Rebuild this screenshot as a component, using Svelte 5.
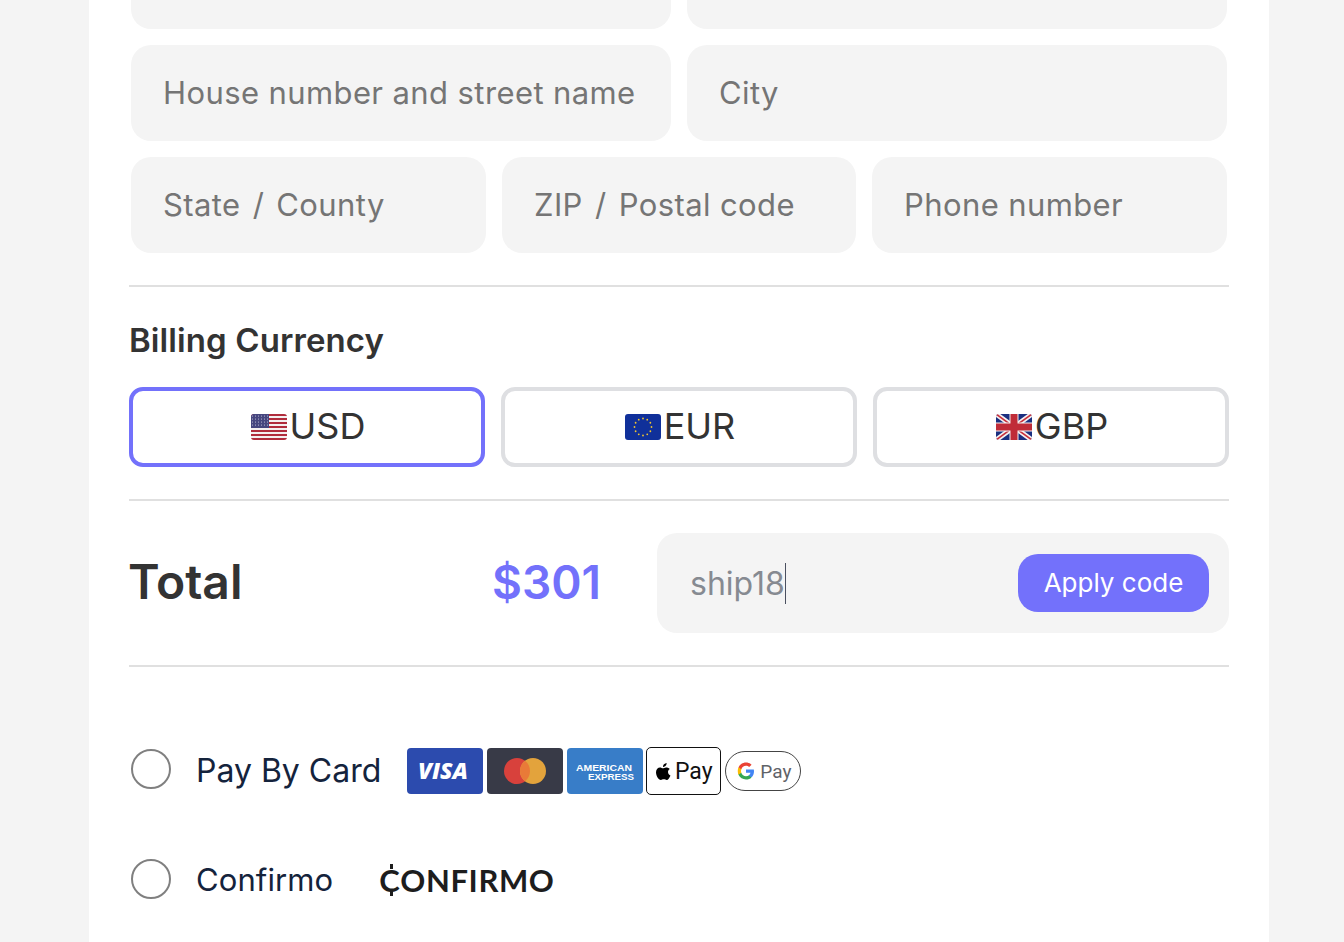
<script lang="ts">
	const currencies = [
		{ code: 'USD', flag: 'us' },
		{ code: 'EUR', flag: 'eu' },
		{ code: 'GBP', flag: 'gb' }
	];
	let selected = $state('USD');
	let coupon = $state('ship18');

	const stars = Array.from({ length: 12 }, (_, i) => {
		const a = (i * Math.PI) / 6;
		return { x: 18 + Math.cos(a) * 8.5, y: 13 + Math.sin(a) * 8.5 };
	});
	const stripes = [0, 2, 4, 6, 8, 10, 12].map((i) => i * 2);
</script>

<main class="card">
	<div class="fields two">
		<div class="field"></div>
		<div class="field"></div>
	</div>
	<div class="fields two">
		<div class="field"><span>House number and street name</span></div>
		<div class="field"><span>City</span></div>
	</div>
	<div class="fields three">
		<div class="field"><span>State <span class="slash">/</span> County</span></div>
		<div class="field"><span>ZIP <span class="slash">/</span> Postal code</span></div>
		<div class="field"><span>Phone number</span></div>
	</div>

	<hr class="first" />

	<h3>Billing Currency</h3>
	<div class="currencies">
		{#each currencies as c}
			<button class="currency" class:active={selected === c.code} onclick={() => (selected = c.code)}>
				<svg class="flag" viewBox="0 0 36 26" width="36" height="26">
					<defs>
						<clipPath id="flag-{c.flag}"><rect width="36" height="26" rx="3" /></clipPath>
					</defs>
					<g clip-path="url(#flag-{c.flag})">
						{#if c.flag === 'us'}
							<rect width="36" height="26" fill="#f4f0f0" />
							{#each stripes as y}
								<rect y={y} width="36" height="2" fill="#b02c3c" />
							{/each}
							<rect width="18" height="14" fill="#46467f" />
							{#each [2, 5, 8, 11] as y}
								{#each [2, 5, 8, 11, 14, 17] as x}
									<circle cx={x - 0.5} cy={y} r="0.6" fill="#c8c8dc" />
								{/each}
							{/each}
						{:else if c.flag === 'eu'}
							<rect width="36" height="26" fill="#10309a" />
							{#each stars as s}
								<circle cx={s.x} cy={s.y} r="0.9" fill="#f0c430" />
							{/each}
						{:else}
							<rect width="36" height="26" fill="#1a2f80" />
							<path d="M0 0L36 26M36 0L0 26" stroke="#f4f0f0" stroke-width="5" />
							<path d="M0 0L36 26M36 0L0 26" stroke="#c8303c" stroke-width="1.6" />
							<path d="M18 0V26M0 13H36" stroke="#f4f0f0" stroke-width="9" />
							<path d="M18 0V26M0 13H36" stroke="#c02c38" stroke-width="7" />
						{/if}
					</g>
				</svg>
				<span class="code">{c.code}</span>
			</button>
		{/each}
	</div>

	<hr class="second" />

	<div class="total-row">
		<div class="total">
			<span class="total-label">Total</span>
			<span class="amount">$301</span>
		</div>
		<div class="coupon">
			<span class="coupon-text">{coupon}<i class="caret"></i></span>
			<button class="apply"><span>Apply code</span></button>
		</div>
	</div>

	<hr class="third" />

	<div class="pay-row card-row">
		<span class="radio"></span>
		<span class="pay-label">Pay By Card</span>
		<div class="logos">
			<svg class="brand" viewBox="0 0 76 46" width="76" height="46">
				<rect width="76" height="46" rx="4" fill="#2c4bae" />
				<text x="11" y="31" textLength="50" lengthAdjust="spacingAndGlyphs" class="visa">VISA</text>
			</svg>
			<svg class="brand" viewBox="0 0 76 46" width="76" height="46">
				<rect width="76" height="46" rx="4" fill="#383a47" />
				<circle cx="30" cy="23" r="13" fill="#d8413c" />
				<circle cx="46" cy="23" r="13" fill="#e3a33c" />
				<path d="M38 12.750a13 13 0 0 1 0 20.500a13 13 0 0 1 0-20.500z" fill="#e97a38" />
			</svg>
			<svg class="brand" viewBox="0 0 76 46" width="76" height="46">
				<rect width="76" height="46" rx="4" fill="#387dc8" />
				<text x="9" y="22.500" textLength="56" lengthAdjust="spacingAndGlyphs" class="amex">AMERICAN</text>
				<text x="21" y="32" textLength="46" lengthAdjust="spacingAndGlyphs" class="amex">EXPRESS</text>
			</svg>
			<div class="apple">
				<svg viewBox="0 0 16 19" width="16" height="19">
					<path d="M11.6 1c.1 1-.3 2-1 2.8-.6.7-1.600 1.300-2.600 1.200-.1-1 .4-2 1-2.700C9.700 1.600 10.800 1.100 11.600 1zM14.800 7c-1.700 1.100-1.800 2.300-1.800 3 0 1.800 1.300 2.900 2.400 3.400-.5 1.500-1.900 4.600-3.700 4.600-1 0-1.500-.7-2.900-.7s-1.900.7-2.900.7C3.500 18 1 13.800 1 10.300 1 7.200 3 5.500 5 5.500c1.200 0 2.200.8 2.900.8s1.800-.9 3.200-.9c.8 0 2.600.2 3.700 1.600z" fill="#000" />
				</svg>
				<span>Pay</span>
			</div>
			<div class="gpay">
				<svg viewBox="0 0 18 18" width="18" height="18">
					<path d="M17 9.200c0-.6-.1-1.200-.2-1.700H9v3.300h4.500c-.2 1-.8 1.900-1.700 2.500v2h2.700c1.600-1.400 2.500-3.600 2.500-6.100z" fill="#4285f4" />
					<path d="M9 17.500c2.300 0 4.200-.8 5.500-2.100l-2.700-2c-.7.500-1.700.8-2.800.8-2.200 0-4-1.500-4.700-3.500H1.500v2.100C2.900 15.600 5.700 17.500 9 17.500z" fill="#34a853" />
					<path d="M4.300 10.700c-.4-1.100-.4-2.300 0-3.400V5.200H1.500c-1 2.200-1 5.400 0 7.600z" fill="#fbbc04" />
					<path d="M9 3.800c1.200 0 2.300.4 3.200 1.300l2.400-2.400C13.100 1.300 11.200.5 9 .5 5.700.5 2.900 2.400 1.500 5.200l2.800 2.100C5 5.300 6.800 3.800 9 3.800z" fill="#ea4335" />
				</svg>
				<span>Pay</span>
			</div>
		</div>
	</div>

	<div class="pay-row">
		<span class="radio"></span>
		<span class="pay-label small">Confirmo</span>
		<span class="confirmo"><b class="c-mark">C</b>ONFIRMO</span>
	</div>
</main>

<style>
	:global(body) {
		margin: 0;
		background: #f4f4f4;
		overflow: hidden;
	}

	.card {
		box-sizing: border-box;
		width: 1180px;
		height: 1009px;
		margin: -67px 0 0 89px;
		padding: 0 40px;
		background: #fff;
		font-family: Inter, 'Liberation Sans', sans-serif;
		color: #333;
	}

	.fields {
		display: grid;
		gap: 16px;
		padding: 0 2px;
		margin-bottom: 16px;
	}

	.two {
		grid-template-columns: 1fr 1fr;
	}

	.three {
		grid-template-columns: 355px 354px 355px;
		margin-bottom: 0;
	}

	.field {
		display: flex;
		align-items: center;
		height: 96px;
		padding: 0 32px 2px;
		box-sizing: border-box;
		background: #f4f4f4;
		border-radius: 20px;
		font-size: 31px;
		letter-spacing: 0.4px;
		color: #757575;
		white-space: pre;
	}

	.slash {
		margin: 0 3px;
	}

	hr {
		border: 0;
		height: 2px;
		background: #e0e0e0;
		margin: 0;
	}

	hr.first {
		margin-top: 32px;
	}

	h3 {
		margin: 34px 0 28px;
		font-size: 33px;
		line-height: 38px;
		font-weight: 600;
		letter-spacing: 0.1px;
		color: #333;
	}

	.currencies {
		display: grid;
		grid-template-columns: 356px 356px 356px;
		gap: 16px;
	}

	.currency {
		display: flex;
		align-items: center;
		justify-content: center;
		gap: 3px;
		height: 80px;
		background: #fff;
		border: 4px solid #dedfe2;
		border-radius: 14px;
		font-family: inherit;
		font-size: 36px;
		color: #333;
		padding: 0 0 0 2px;
	}

	.code {
		margin-bottom: 2px;
	}

	.currency.active {
		border-color: #7371fb;
	}

	hr.second {
		margin-top: 32px;
	}

	.total-row {
		display: flex;
		align-items: center;
		margin-top: 32px;
		height: 100px;
	}

	.total {
		display: flex;
		justify-content: space-between;
		align-items: center;
		width: 472px;
		padding-bottom: 4px;
		font-size: 48px;
		font-weight: 600;
	}

	.total-label {
		margin-left: -1px;
	}

	.amount {
		padding-top: 2px;
		font-size: 46px;
		color: #7371fb;
	}

	.coupon {
		display: flex;
		align-items: center;
		justify-content: space-between;
		box-sizing: border-box;
		width: 572px;
		height: 100px;
		margin-left: auto;
		padding: 0 20px 0 33px;
		background: #f4f4f4;
		border-radius: 20px;
	}

	.coupon-text {
		display: flex;
		align-items: center;
		font-size: 32px;
		color: #868a91;
	}

	.caret {
		display: block;
		width: 1px;
		height: 41px;
		background: #4a5060;
	}

	.apply {
		width: 191px;
		height: 58px;
		border: 0;
		border-radius: 20px;
		background: #7371fb;
		color: #fff;
		font-family: inherit;
		font-size: 26px;
		padding: 0 0 2px;
	}

	hr.third {
		margin-top: 32px;
	}

	.pay-row {
		display: flex;
		align-items: center;
		height: 48px;
		padding-left: 2px;
		margin-bottom: 62px;
	}

	.card-row {
		margin-top: 80px;
	}

	.radio {
		box-sizing: border-box;
		width: 40px;
		height: 40px;
		margin-bottom: 4px;
		border: 2px solid #808080;
		border-radius: 50%;
		flex-shrink: 0;
	}

	.pay-label {
		margin: 0 0 2px 25px;
		font-size: 32px;
		color: #14233c;
	}

	.pay-label.small {
		margin-bottom: 4px;
		font-size: 31px;
		letter-spacing: 0.1px;
	}

	.logos {
		display: flex;
		align-items: center;
		margin-left: 26px;
		gap: 4px;
	}

	.brand {
		display: block;
	}

	.visa {
		font-family: 'Open Sans', sans-serif;
		font-size: 23px;
		font-weight: 800;
		font-style: italic;
		fill: #fff;
	}

	.amex {
		font-family: 'Liberation Sans', sans-serif;
		font-size: 9px;
		font-weight: 700;
		fill: #fff;
	}

	.apple {
		display: flex;
		align-items: center;
		justify-content: center;
		gap: 4px;
		box-sizing: border-box;
		width: 75px;
		height: 48px;
		margin-left: -1px;
		border: 1.500px solid #111;
		border-radius: 5px;
		font-family: Roboto, sans-serif;
		font-size: 23px;
		color: #111;
	}

	.gpay {
		display: flex;
		align-items: center;
		gap: 5px;
		box-sizing: border-box;
		width: 76px;
		height: 40px;
		padding-left: 11px;
		border: 1.500px solid #444;
		border-radius: 20px;
		font-family: Roboto, sans-serif;
		font-size: 19px;
		color: #5f6368;
	}

	.confirmo {
		margin: 0 0 2px 46px;
		font-family: Lato, sans-serif;
		font-size: 31px;
		font-weight: 700;
		letter-spacing: 0.6px;
		color: #1d1d1d;
	}

	.c-mark {
		position: relative;
		font-weight: 700;
	}

	.c-mark::before,
	.c-mark::after {
		content: '';
		position: absolute;
		left: 50%;
		width: 3px;
		height: 5px;
		background: #1d1d1d;
	}

	.c-mark::before {
		top: 3px;
	}

	.c-mark::after {
		bottom: 3px;
	}
</style>
